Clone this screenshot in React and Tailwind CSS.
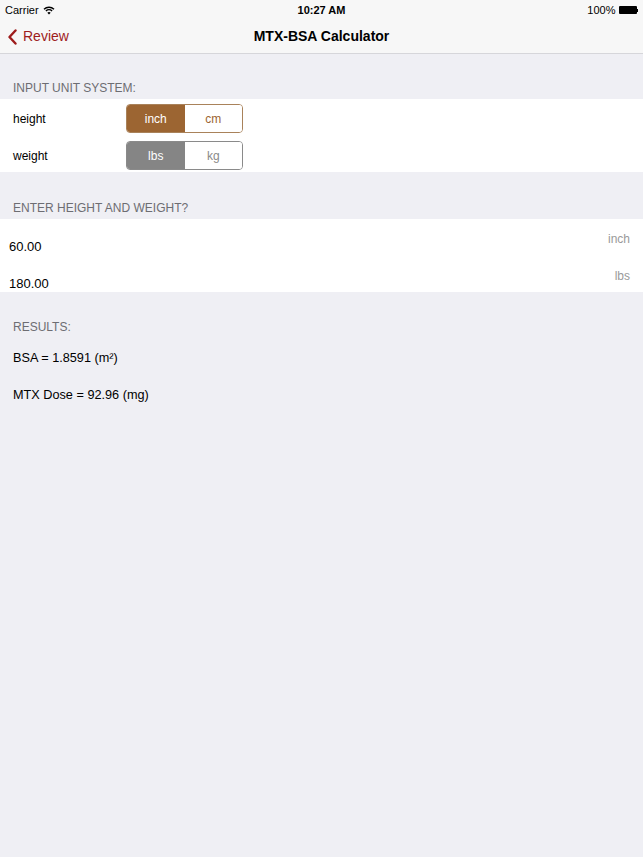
import React from "react";

function Seg({ left, right, color, border, rightColor }) {
  return (
    <div
      className="flex h-[29px] w-[117px] rounded-[4px] border overflow-hidden text-[12px]"
      style={{ borderColor: border }}
    >
      <div className="flex-1 flex items-center justify-center text-white" style={{ backgroundColor: color }}>
        {left}
      </div>
      <div className="flex-1 flex items-center justify-center bg-white" style={{ color: rightColor }}>
        {right}
      </div>
    </div>
  );
}

export default function App() {
  return (
    <div
      className="w-[643px] h-[857px] bg-[#efeff4] text-black"
      style={{ fontFamily: '"Liberation Sans", Arial, sans-serif' }}
    >
      {/* status bar */}
      <div className="h-[20px] bg-[#f7f7f7] flex items-center px-[5px] text-[11px] relative">
        <div className="flex items-center gap-[4px]">
          <span>Carrier</span>
          <svg width="12" height="9" viewBox="0 0 12 9">
            <path d="M1 3.2 A7.2 7.2 0 0 1 11 3.2" stroke="black" strokeWidth="1.4" fill="none" />
            <path d="M2.9 5 A4.5 4.5 0 0 1 9.1 5" stroke="black" strokeWidth="1.4" fill="none" />
            <path d="M4.3 6.8 L6 8.6 L7.7 6.8 A2.4 2.4 0 0 0 4.3 6.8 Z" fill="black" />
          </svg>
        </div>
        <div className="absolute left-0 right-0 text-center font-bold text-[11px] pointer-events-none">10:27 AM</div>
        <div className="ml-auto flex items-center gap-[3px]">
          <span>100%</span>
          <div className="flex items-center">
            <div className="w-[18px] h-[8px] bg-black rounded-[1px]" />
            <div className="w-[1.5px] h-[3px] bg-black" />
          </div>
        </div>
      </div>
      {/* nav bar */}
      <div className="h-[34px] bg-[#f7f7f7] border-b border-[#d6d6da] flex items-center relative">
        <div className="flex items-center pl-[7px] gap-[5px] text-[#9e1c1c] text-[14px]">
          <svg width="11" height="16" viewBox="0 0 11 16">
            <path d="M8.5 1.5 L2.5 8 L8.5 14.5" stroke="#9e1c1c" strokeWidth="2.4" fill="none" strokeLinecap="round" strokeLinejoin="round" />
          </svg>
          <span>Review</span>
        </div>
        <div className="absolute left-0 right-0 text-center font-bold text-[14px] pointer-events-none">MTX-BSA Calculator</div>
      </div>

      {/* section 1 */}
      <div className="h-[45px] flex items-end pb-[2px] px-[13px] text-[12px] text-[#6d6d72]">INPUT UNIT SYSTEM:</div>
      <div className="bg-white h-[73px] flex flex-col pt-[5px] gap-[8px] pl-[13px] text-[12px]">
        <div className="flex items-center">
          <span className="w-[113px]">height</span>
          <Seg left="inch" right="cm" color="#9c6532" border="#a9825a" rightColor="#9c6532" />
        </div>
        <div className="flex items-center">
          <span className="w-[113px]">weight</span>
          <Seg left="lbs" right="kg" color="#858585" border="#8a8a8a" rightColor="#8a8a8a" />
        </div>
      </div>

      {/* section 2 */}
      <div className="h-[47px] flex items-end pb-[2px] px-[13px] text-[12px] text-[#6d6d72]">ENTER HEIGHT AND WEIGHT?</div>
      <div className="bg-white h-[73px] flex flex-col">
        <div className="h-[37px] flex justify-between pl-[9px] pr-[13px]">
          <span className="pt-[18px] text-[13px]">60.00</span>
          <span className="pt-[11px] text-[12px] text-[#9a9a9a]">inch</span>
        </div>
        <div className="h-[36px] flex justify-between pl-[9px] pr-[13px]">
          <span className="pt-[18px] text-[13px]">180.00</span>
          <span className="pt-[11px] text-[12px] text-[#9a9a9a]">lbs</span>
        </div>
      </div>

      {/* results */}
      <div className="h-[44px] flex items-end px-[13px] text-[12px] text-[#6d6d72]">RESULTS:</div>
      <div className="px-[13px] text-[12.7px] flex flex-col">
        <div className="mt-[13px]">BSA = 1.8591 (m²)</div>
        <div className="mt-[18px]">MTX Dose = 92.96 (mg)</div>
      </div>
    </div>
  );
}
